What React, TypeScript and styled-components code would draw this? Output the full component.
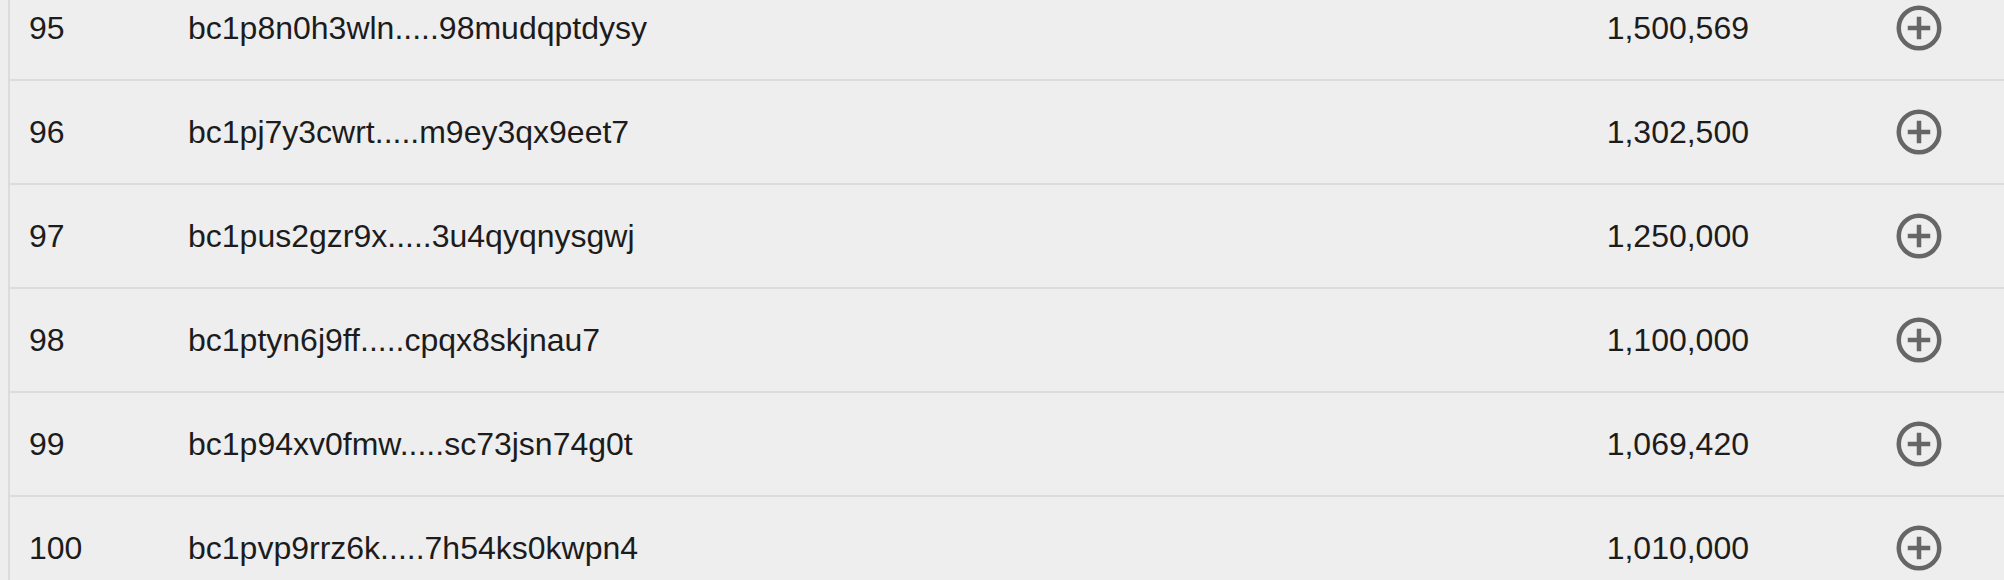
import React from 'react';
import styled, { createGlobalStyle } from 'styled-components';

const GlobalStyle = createGlobalStyle`
    html, body {
        margin: 0;
        padding: 0;
        background: #eeeeee;
        overflow: hidden;
    }
    body {
        font-family: "Liberation Sans", Arial, Helvetica, sans-serif;
        color: #1c1c1c;
    }
`;

const Page = styled.div`
    padding-left: 8px;
    margin-top: -23px;
`;

const Table = styled.div`
    border-left: 2px solid #dcdcdc;
`;

const Row = styled.div`
    display: grid;
    grid-template-columns: 178px 1fr 300px 170px;
    align-items: center;
    height: 102px;
    border-bottom: 2px solid #dcdcdc;
    font-size: 32px;
`;

const Rank = styled.div`
    padding-left: 19px;
`;

const Address = styled.div`
    white-space: nowrap;
`;

const Amount = styled.div`
    text-align: right;
    padding-right: 85px;
`;

const Action = styled.div`
    display: flex;
    justify-content: center;
    align-items: center;
`;

const AddButton = styled.button`
    display: flex;
    padding: 0;
    border: none;
    background: none;
    color: #666666;
    cursor: pointer;
`;

type Holder = {
    rank: number
    address: string
    amount: string
}

const holders: Holder[] = [
    { rank: 95, address: 'bc1p8n0h3wln.....98mudqptdysy', amount: '1,500,569' },
    { rank: 96, address: 'bc1pj7y3cwrt.....m9ey3qx9eet7', amount: '1,302,500' },
    { rank: 97, address: 'bc1pus2gzr9x.....3u4qyqnysgwj', amount: '1,250,000' },
    { rank: 98, address: 'bc1ptyn6j9ff.....cpqx8skjnau7', amount: '1,100,000' },
    { rank: 99, address: 'bc1p94xv0fmw.....sc73jsn74g0t', amount: '1,069,420' },
    { rank: 100, address: 'bc1pvp9rrz6k.....7h54ks0kwpn4', amount: '1,010,000' },
];

const PlusCircle = () => (
    <svg width="54" height="54" viewBox="0 0 24 24" fill="none" stroke="currentColor" strokeWidth="2">
        <circle cx="12" cy="12" r="9" />
        <path d="M12 7v10M7 12h10" />
    </svg>
);

const App: React.FC = () => {
    return (
        <>
            <GlobalStyle />
            <Page>
                <Table>
                    {holders.map(h => (
                        <Row key={h.rank}>
                            <Rank>{h.rank}</Rank>
                            <Address>{h.address}</Address>
                            <Amount>{h.amount}</Amount>
                            <Action>
                                <AddButton aria-label='Add'>
                                    <PlusCircle />
                                </AddButton>
                            </Action>
                        </Row>
                    ))}
                </Table>
            </Page>
        </>
    );
};

export default App;
